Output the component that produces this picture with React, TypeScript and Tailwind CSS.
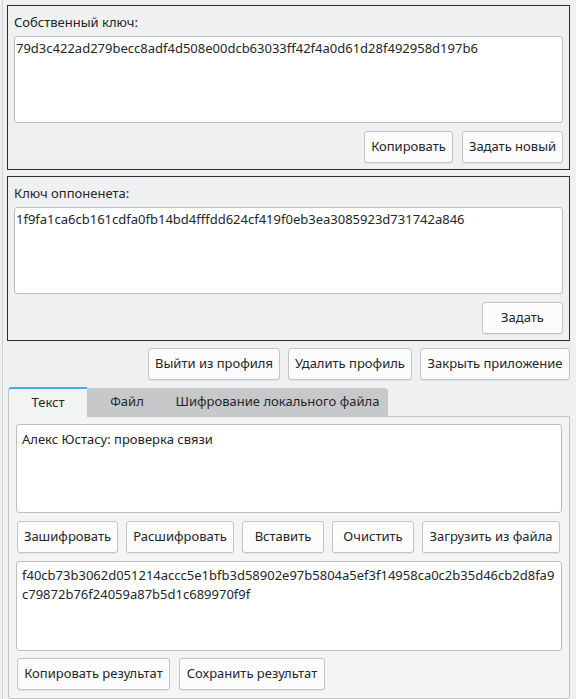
const Btn = ({ label, w }: { label: string; w: string }) => (
  <button
    className={`${w} h-[32px] shrink-0 rounded-[3px] border border-[#c3c4c5] bg-[#fcfcfc] text-[13px] text-[#232629] shadow-[0_1px_0_rgba(0,0,0,0.06)]`}
  >
    {label}
  </button>
);

const Field = ({ text, cls }: { text: string; cls: string }) => (
  <div
    className={`${cls} w-full rounded-[3px] border border-[#bcbdbe] bg-white whitespace-pre-wrap`}
  >
    {text}
  </div>
);

const KeyBox = ({
  title,
  value,
  children,
}: {
  title: string;
  value: string;
  children: React.ReactNode;
}) => (
  <div className="flex flex-col border border-[#2b2e31] px-[6px] pt-[7px] pb-[6px]">
    <div className="leading-[18px]">{title}</div>
    <div className="mt-[5px]">
      <Field text={value} cls="h-[87px] pl-px pr-[2px] pt-[2px] leading-[18px]" />
    </div>
    <div className="mt-[8px] flex justify-end gap-[9px]">{children}</div>
  </div>
);

export default function App() {
  return (
    <div className="relative min-h-[699px] w-[576px] overflow-hidden bg-[#eff0f1] font-['Noto_Sans',sans-serif] text-[13px] text-[#232629]">
      <div className="absolute top-0 bottom-0 left-[2px] w-px bg-[#cfd0d1]" />
      <div className="flex flex-col pt-[5px] pr-[6px] pl-[7px]">
        <KeyBox
          title="Собственный ключ:"
          value="79d3c422ad279becc8adf4d508e00dcb63033ff42f4a0d61d28f492958d197b6"
        >
          <Btn label="Копировать" w="w-[89px]" />
          <Btn label="Задать новый" w="w-[101px]" />
        </KeyBox>

        <div className="mt-[6px]">
          <KeyBox
            title="Ключ оппоненета:"
            value="1f9fa1ca6cb161cdfa0fb14bd4fffdd624cf419f0eb3ea3085923d731742a846"
          >
            <Btn label="Задать" w="w-[81px]" />
          </KeyBox>
        </div>

        <div className="mt-[7px] flex justify-end gap-[8px]">
          <Btn label="Выйти из профиля" w="w-[132px]" />
          <Btn label="Удалить профиль" w="w-[124px]" />
          <Btn label="Закрыть приложение" w="w-[150px]" />
        </div>

        <div className="mt-[7px] ml-px flex h-[30px] items-end">
          <div className="relative z-10 flex h-[30px] w-[79px] items-center justify-center rounded-tl-[4px] border-t-2 border-l border-t-[#3daee9] border-l-[#c3c4c5] bg-[#f3f4f4] pb-[1px]">
            Текст
          </div>
          <div className="flex h-[29px] items-center rounded-tr-[4px] bg-[#c7c8c9] pb-[1px]">
            <div className="w-[80px] text-center">Файл</div>
            <div className="w-[221px] text-center">Шифрование локального файла</div>
          </div>
        </div>

        <div className="ml-px -mt-px flex h-[283px] flex-col rounded-b-[3px] border border-[#c3c4c5] bg-[#f3f4f4] px-[7px] pt-[7px]">
          <Field
            text="Алекс Юстасу: проверка связи"
            cls="h-[89px] pl-[5px] pr-[4px] pt-[5px] leading-[19px]"
          />
          <div className="mt-[8px] flex gap-[8px] pl-px">
            <Btn label="Зашифровать" w="w-[101px]" />
            <Btn label="Расшифровать" w="w-[108px]" />
            <Btn label="Вставить" w="w-[82px]" />
            <Btn label="Очистить" w="w-[82px]" />
            <Btn label="Загрузить из файла" w="w-[138px]" />
          </div>
          <div className="mt-[8px]">
            <Field
              text={
                "f40cb73b3062d051214accc5e1bfb3d58902e97b5804a5ef3f14958ca0c2b35d46cb2d8fa9\nc79872b76f24059a87b5d1c689970f9f"
              }
              cls="h-[90px] pl-[5px] pr-[4px] pt-[4px] leading-[19px]"
            />
          </div>
          <div className="mt-[7px] flex gap-[9px] pl-px">
            <Btn label="Копировать результат" w="w-[153px]" />
            <Btn label="Сохранить результат" w="w-[146px]" />
          </div>
        </div>
      </div>
    </div>
  );
}
